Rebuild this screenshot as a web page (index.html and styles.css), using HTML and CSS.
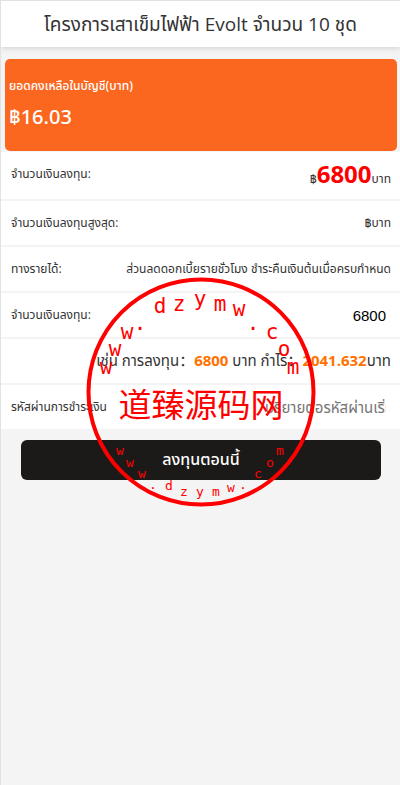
FILE: index.html
```html
<!DOCTYPE html>
<html lang="th">
<head>
    <meta charset="UTF-8">
    <meta name="viewport" content="width=device-width, initial-scale=1.0">
    <title>โครงการเสาเข็มไฟฟ้า Evolt</title>
    <link rel="stylesheet" href="styles.css">
</head>
<body>

    <header class="header">
        <h1>โครงการเสาเข็มไฟฟ้า Evolt จำนวน 10 ชุด</h1>
    </header>

    <!-- Account balance -->
    <div class="balance">
        <p>ยอดคงเหลือในบัญชี(บาท)</p>
        <strong>฿16.03</strong>
    </div>

    <form class="invest">
        <div class="row first">
            <span>จำนวนเงินลงทุน:</span>
            <span>฿<b class="price">6800</b>บาท</span>
        </div>
        <div class="row">
            <span>จำนวนเงินลงทุนสูงสุด:</span>
            <span>฿บาท</span>
        </div>
        <div class="row">
            <span>ทางรายได้:</span>
            <span>ส่วนลดดอกเบี้ยรายชั่วโมง ชำระคืนเงินต้นเมื่อครบกำหนด</span>
        </div>
        <div class="row">
            <label for="money">จำนวนเงินลงทุน:</label>
            <input type="text" id="money" value="6800">
        </div>
        <div class="row profit">
            <p>เช่น การลงทุน<span lang="zh-CN">：</span><b>6800</b> บาท กำไร<span lang="zh-CN">：</span><b>2041.632</b>บาท</p>
        </div>
        <div class="row">
            <label for="payPassword">รหัสผ่านการชำระเงิน</label>
            <input type="password" id="payPassword" placeholder="ปริยายต่อรหัสผ่านเริ่มต้น">
        </div>
        <button type="button" class="submit">ลงทุนตอนนี้</button>
    </form>

    <!-- Stamp over the form -->
    <svg class="stamp" viewBox="0 0 232 232" aria-hidden="true">
        <circle cx="116" cy="116" r="112.5" fill="none" stroke="#f00" stroke-width="4"/>
        <g class="top">
            <text x="21" y="98">w</text>
            <text x="30" y="80">w</text>
            <text x="42" y="63">w</text>
            <text x="55" y="54">.</text>
            <text x="75" y="37">d</text>
            <text x="94" y="35">z</text>
            <text x="115" y="30">y</text>
            <text x="135" y="35">m</text>
            <text x="154" y="40">w</text>
            <text x="168" y="54">.</text>
            <text x="187" y="63">c</text>
            <text x="199" y="80">o</text>
            <text x="208" y="98">m</text>
        </g>
        <text class="name" x="116" y="141">道臻源码网</text>
        <g class="bottom">
            <text x="35" y="179">w</text>
            <text x="45" y="191">w</text>
            <text x="57" y="202">w</text>
            <text x="68" y="213">.</text>
            <text x="84" y="214">d</text>
            <text x="99" y="220">z</text>
            <text x="115" y="220">y</text>
            <text x="131" y="220">m</text>
            <text x="146" y="216">w</text>
            <text x="158" y="213">.</text>
            <text x="173" y="202">c</text>
            <text x="185" y="191">o</text>
            <text x="195" y="179">m</text>
        </g>
    </svg>

</body>
</html>
```

FILE: styles.css
```css
* {
    box-sizing: border-box;
}

body {
    position: relative;
    margin: 0;
    min-height: 100vh;
    border-left: 1px solid #e2e2e2;
    background-color: #f4f4f4;
    color: #333;
    font-family: "Open Sans", "Noto Sans Thai", "Noto Sans CJK SC", sans-serif;
    font-size: 12px;
}

.header {
    height: 47px;
    border-top: 1px solid #e2e2e2;
    background-color: #fff;
    box-shadow: 0 1px 6px rgba(0, 0, 0, 0.15);
}

.header h1 {
    margin: 0;
    font-size: 19px;
    font-weight: normal;
    line-height: 46px;
    text-align: center;
    white-space: nowrap;
}

.balance {
    height: 92px;
    margin: 12px 3px 0 4px;
    padding: 18px 4px;
    border-radius: 5px;
    background-color: #fc671f;
    color: #fff;
    font-family: "Noto Sans", "Noto Sans Thai", sans-serif;
}

.balance p {
    margin: 0;
    line-height: 18px;
    font-weight: 500;
}

.balance strong {
    display: block;
    font-size: 20px;
    font-weight: 500;
    line-height: 44px;
}

.row {
    display: flex;
    justify-content: space-between;
    align-items: center;
    height: 46px;
    padding: 0 9px 0 10px;
    border-bottom: 2px solid #f4f4f4;
    background-color: #fff;
    white-space: nowrap;
}

.first {
    height: 49px;
    margin-top: 1px;
    padding-bottom: 4px;
}

.price {
    color: #f00;
    font-size: 24px;
}

.row input {
    width: 121px;
    margin-right: 5px;
    padding: 0;
    border: none;
    outline: none;
    background: none;
    color: #000;
    font-family: "Liberation Sans", "Noto Sans Thai", sans-serif;
    font-size: 15px;
    text-align: right;
}

.row input::placeholder {
    color: #757575;
}

.profit {
    justify-content: flex-end;
}

.profit p {
    margin: 0;
    font-size: 15px;
}

.profit b {
    color: #ff7200;
}

.submit {
    display: block;
    width: calc(100% - 39px);
    height: 40px;
    margin: 9px 19px 0 20px;
    border: none;
    border-radius: 6px;
    background-color: #1c1a18;
    color: #fff;
    font-family: inherit;
    font-size: 16px;
    font-weight: 500;
    cursor: pointer;
}

.stamp {
    position: absolute;
    top: 276px;
    left: calc(50% - 116px);
    width: 232px;
    height: 232px;
    fill: #f00;
    font-family: "DejaVu Sans Mono", "Noto Sans CJK SC", monospace;
    text-anchor: middle;
    pointer-events: none;
}

.top {
    font-size: 21px;
}

.name {
    font-size: 33px;
}

.bottom {
    font-size: 13px;
}
```
